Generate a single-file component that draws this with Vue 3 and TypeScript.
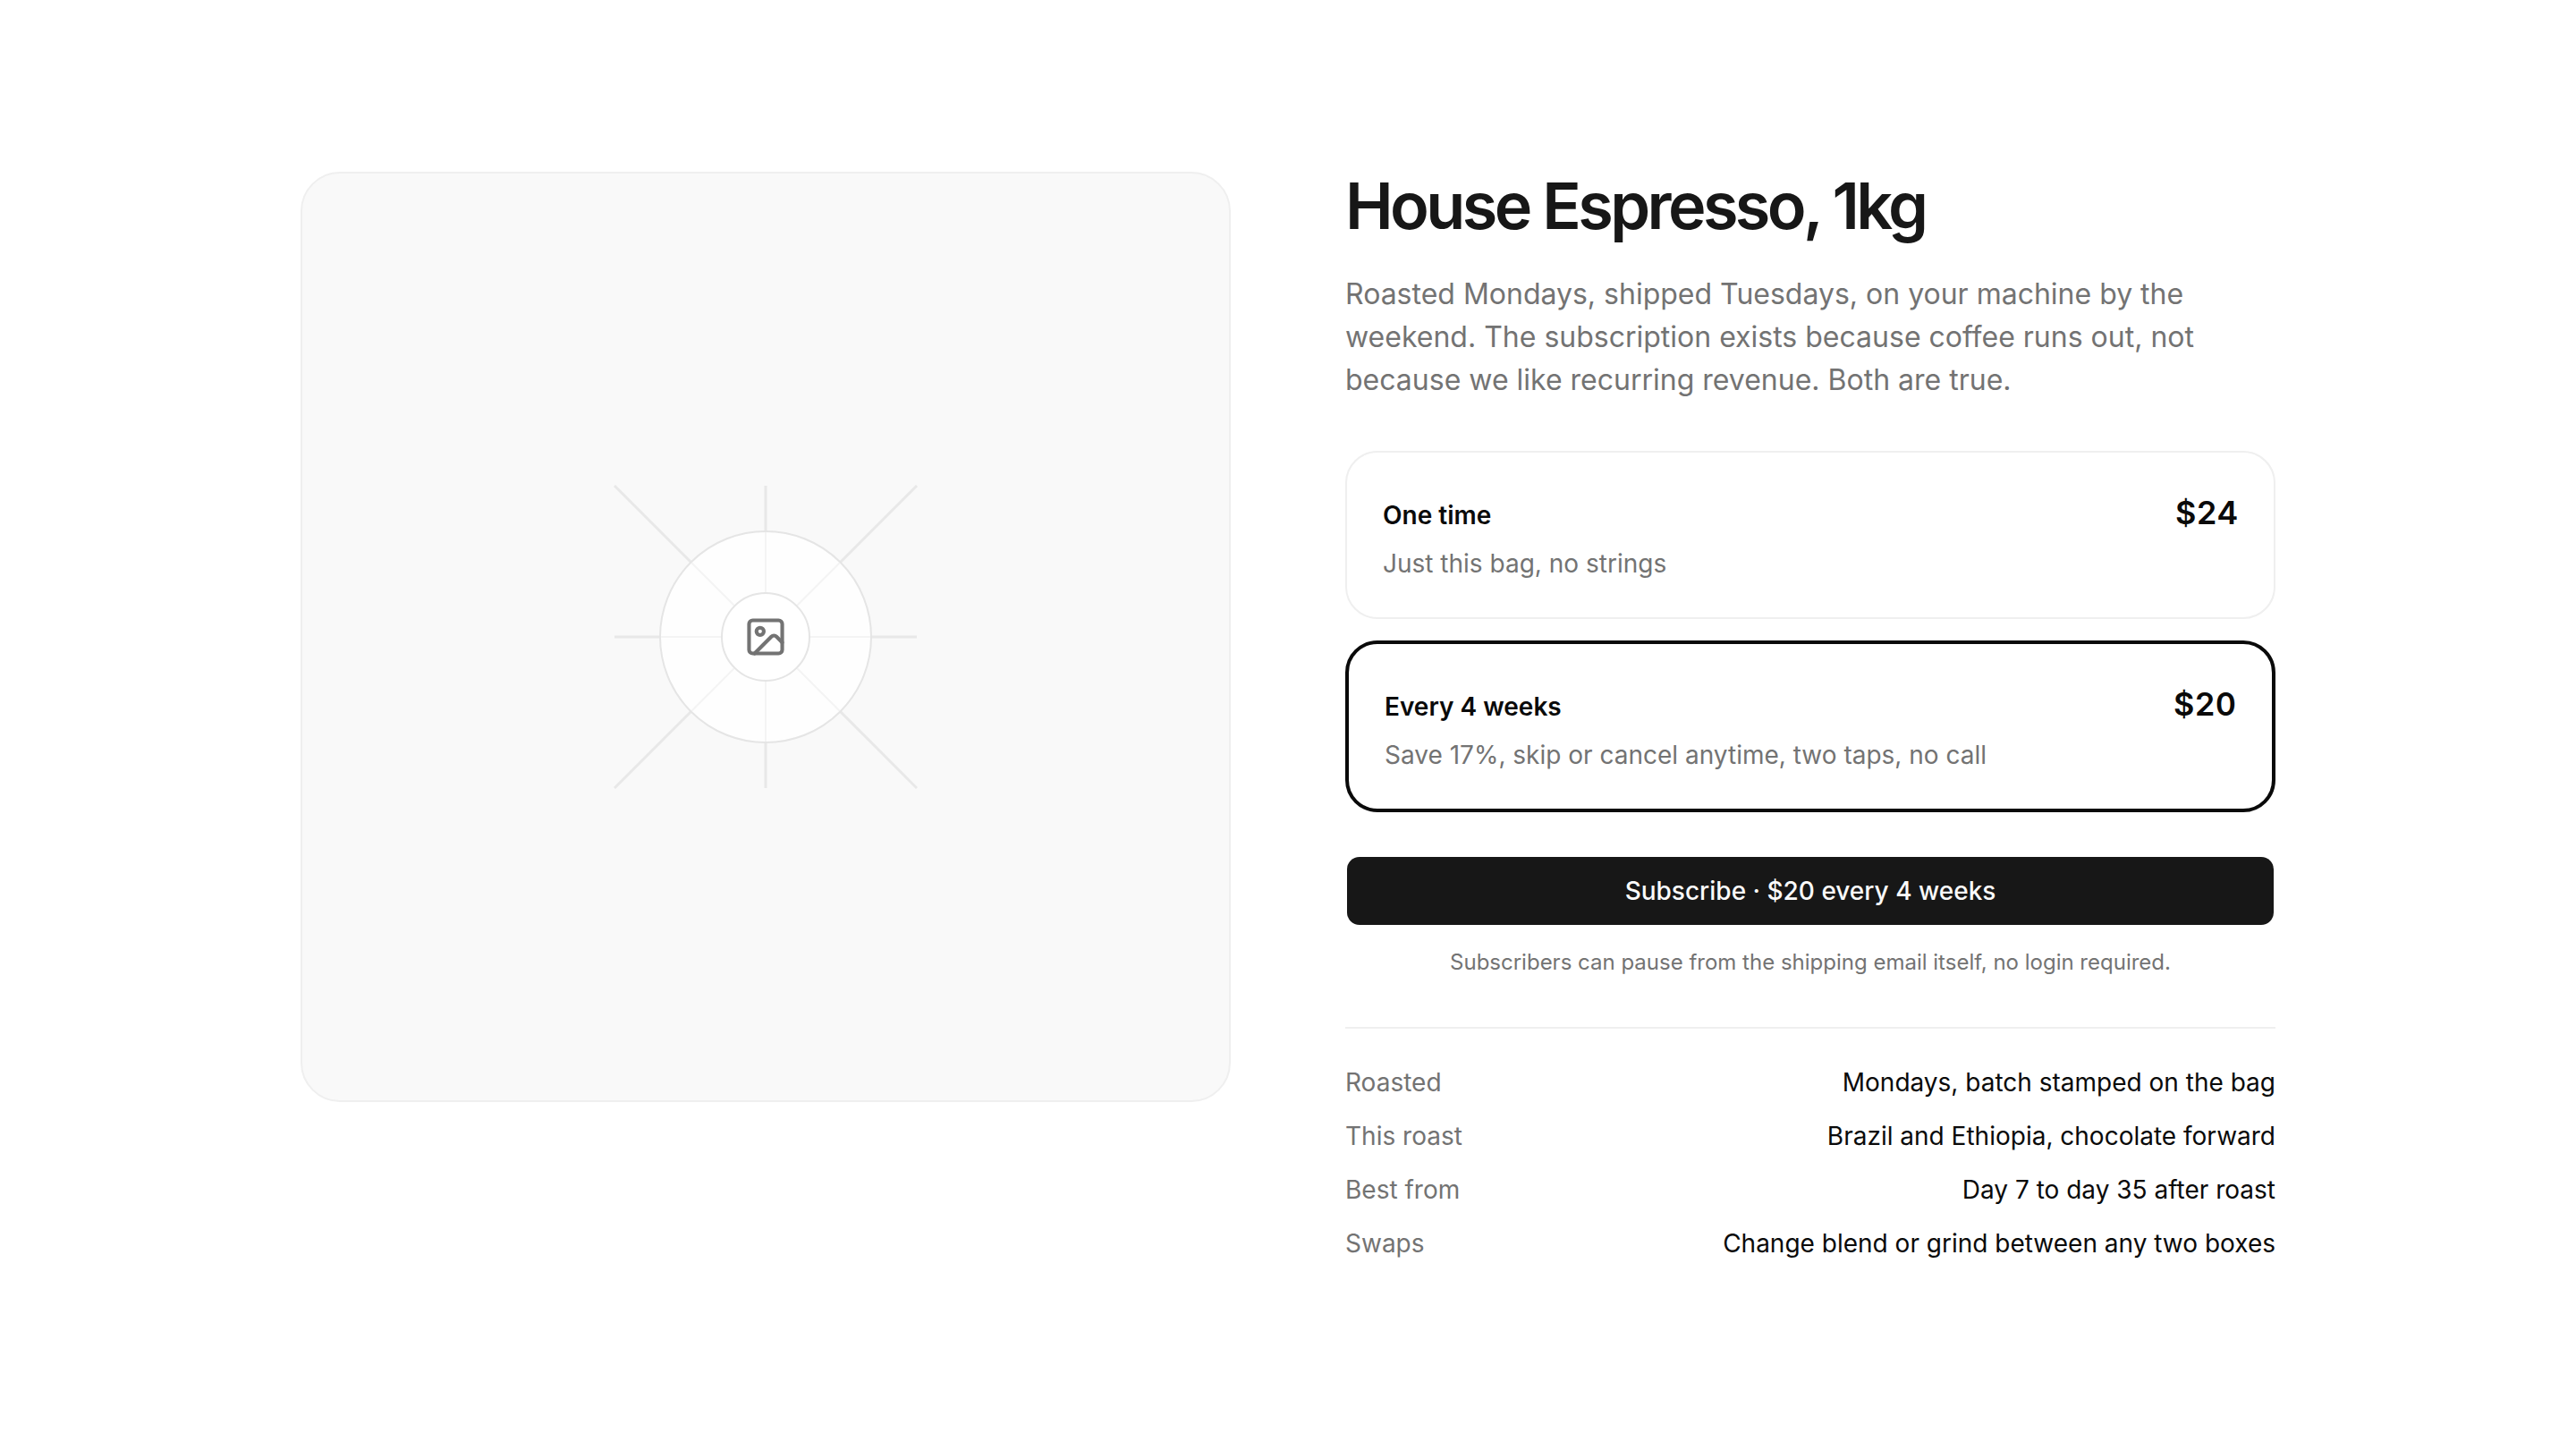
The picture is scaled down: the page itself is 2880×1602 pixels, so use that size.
<script setup lang="ts">
import { computed, ref } from 'vue'

interface Plan {
  id: string
  name: string
  note: string
  price: string
  action: string
}

const plans: Plan[] = [
  { id: 'once', name: 'One time', note: 'Just this bag, no strings', price: '$24', action: 'Buy once · $24' },
  {
    id: 'subscribe',
    name: 'Every 4 weeks',
    note: 'Save 17%, skip or cancel anytime, two taps, no call',
    price: '$20',
    action: 'Subscribe · $20 every 4 weeks',
  },
]

const facts = [
  { label: 'Roasted', value: 'Mondays, batch stamped on the bag' },
  { label: 'This roast', value: 'Brazil and Ethiopia, chocolate forward' },
  { label: 'Best from', value: 'Day 7 to day 35 after roast' },
  { label: 'Swaps', value: 'Change blend or grind between any two boxes' },
]

const selected = ref('subscribe')
const action = computed(() => plans.find((p) => p.id === selected.value)?.action ?? '')
</script>

<template>
  <main class="product">
    <div class="media">
      <svg class="burst" viewBox="-170 -170 340 340" aria-hidden="true">
        <path class="rays" d="M0-169V169M-169 0H169M-169-169L169 169M169-169L-169 169" />
        <circle class="disc" r="118" />
        <path class="spokes" d="M0-118V118M-118 0H118M-83-83L83 83M83-83L-83 83" />
        <circle class="ring" r="118" />
        <circle class="hub" r="49" />
        <g class="glyph" transform="scale(2.06) translate(-12 -12)">
          <rect x="3" y="3" width="18" height="18" rx="2" />
          <circle cx="9" cy="9" r="2" />
          <path d="m21 15-3.086-3.086a2 2 0 0 0-2.828 0L6 21" />
        </g>
      </svg>
    </div>

    <section class="info">
      <h1>House Espresso, 1kg</h1>
      <p class="lead">
        Roasted Mondays, shipped Tuesdays, on your machine by the weekend. The subscription exists
        because coffee runs out, not because we like recurring revenue. Both are true.
      </p>

      <div class="plans" role="radiogroup" aria-label="Purchase plan">
        <label
          v-for="plan in plans"
          :key="plan.id"
          class="plan"
          :class="{ active: plan.id === selected }"
          :for="plan.id"
        >
          <input :id="plan.id" v-model="selected" class="choice" type="radio" name="plan" :value="plan.id" />
          <span class="row">
            <span class="name">{{ plan.name }}</span>
            <span class="price">{{ plan.price }}</span>
          </span>
          <span class="note">{{ plan.note }}</span>
        </label>
      </div>

      <button class="buy" type="button">{{ action }}</button>
      <p class="hint">Subscribers can pause from the shipping email itself, no login required.</p>

      <dl class="facts">
        <div v-for="fact in facts" :key="fact.label" class="fact">
          <dt>{{ fact.label }}</dt>
          <dd>{{ fact.value }}</dd>
        </div>
      </dl>
    </section>
  </main>
</template>

<style>
body {
  background: #fff;
}
</style>

<style scoped>
.product {
  display: grid;
  grid-template-columns: 1fr 1fr;
  gap: 128px;
  align-items: start;
  max-width: 2208px;
  margin: 0 auto;
  padding: 192px 96px;
  color: #0a0a0a;
  font-family: Inter, sans-serif;
  font-size: 28px;
  line-height: 40px;
}

.media {
  display: flex;
  align-items: center;
  justify-content: center;
  box-sizing: border-box;
  aspect-ratio: 1;
  border: 2px solid #efefef;
  border-radius: 44px;
  background: #f9f9f9;
}

.burst {
  width: 340px;
  height: 340px;
}

.rays,
.spokes,
.ring {
  fill: none;
  stroke: #e5e5e5;
  stroke-width: 2;
}

.rays {
  stroke: #e8e8e8;
  stroke-width: 3;
}

.spokes {
  stroke: #f4f4f4;
}

.disc {
  fill: #fefefe;
}

.hub {
  fill: #fff;
  stroke: #e5e5e5;
  stroke-width: 2;
}

.glyph {
  fill: none;
  stroke: #737373;
  stroke-width: 2;
  stroke-linecap: round;
  stroke-linejoin: round;
}

.info {
  display: flex;
  flex-direction: column;
}

h1 {
  margin: 0;
  color: #171717;
  font-size: 72px;
  font-weight: 600;
  line-height: 76px;
  letter-spacing: -0.05em;
}

.lead {
  margin: 37px 0 0;
  color: #737373;
  font-size: 32px;
  line-height: 48px;
}

.plans {
  display: flex;
  flex-direction: column;
  gap: 24px;
  margin-top: 55px;
}

.plan {
  position: relative;
  display: flex;
  flex-direction: column;
  gap: 10px;
  padding: 40px;
  border: 2px solid #efefef;
  border-radius: 36px;
  cursor: pointer;
}

.plan.active {
  border: 4px solid #0a0a0a;
}

.choice {
  position: absolute;
  inset: 0;
  width: 100%;
  height: 100%;
  margin: 0;
  opacity: 0;
  cursor: pointer;
}

.row {
  display: flex;
  align-items: baseline;
  justify-content: space-between;
}

.name {
  font-weight: 600;
}

.price {
  font-size: 36px;
  font-weight: 600;
  font-variant-numeric: tabular-nums;
  line-height: 54px;
}

.note {
  color: #737373;
}

.buy {
  height: 80px;
  margin: 48px 0 0;
  padding: 0 20px;
  border: 2px solid transparent;
  border-radius: 16px;
  background: #171717;
  background-clip: padding-box;
  color: #fafafa;
  font: inherit;
  font-weight: 500;
  cursor: pointer;
}

.hint {
  margin: 24px 0 0;
  color: #737373;
  font-size: 24px;
  line-height: 32px;
  text-align: center;
}

.facts {
  display: flex;
  flex-direction: column;
  gap: 20px;
  margin: 56px 0 0;
  padding-top: 40px;
  border-top: 2px solid #efefef;
}

.fact {
  display: flex;
  justify-content: space-between;
  gap: 32px;
}

dt {
  color: #737373;
}

dd {
  margin: 0;
  text-align: right;
}
</style>
